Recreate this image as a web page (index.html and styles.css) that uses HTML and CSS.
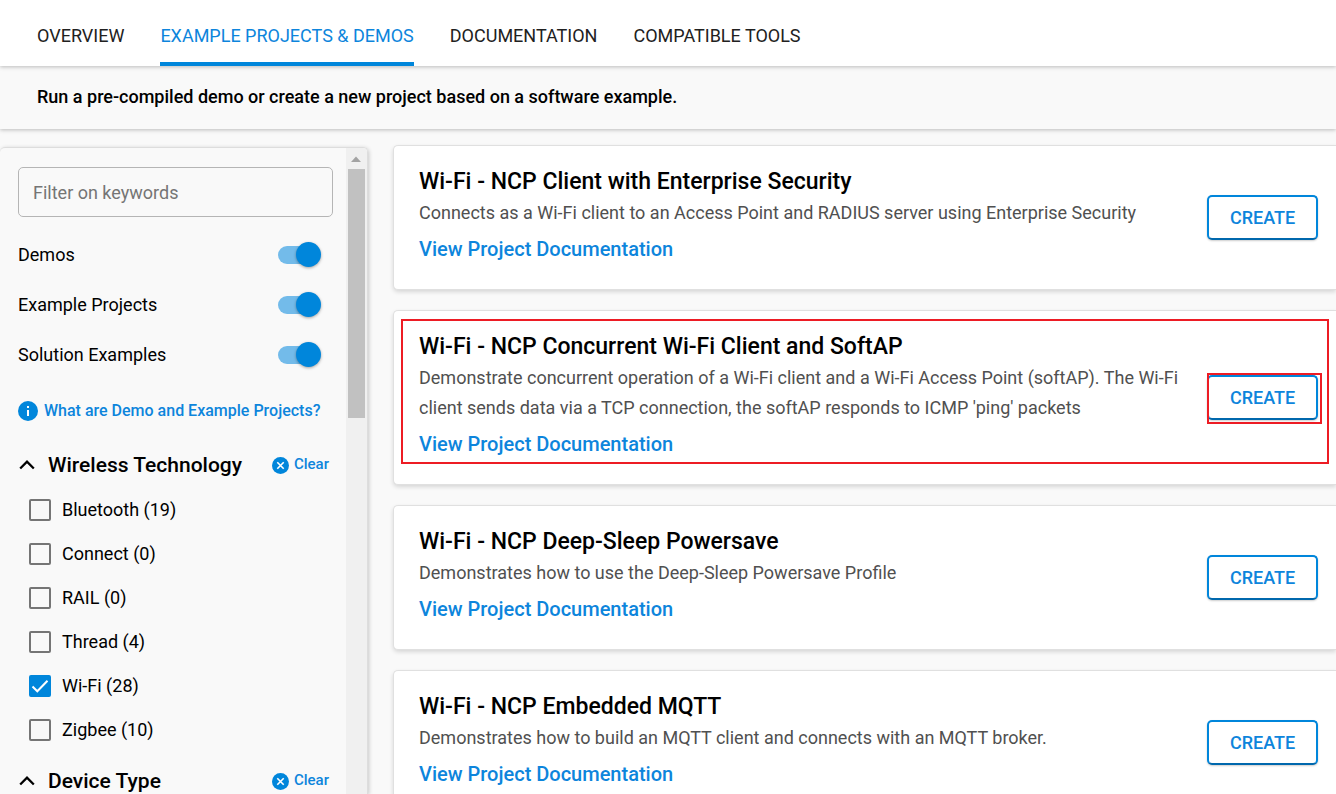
FILE: index.html
```html
<!DOCTYPE html>
<html lang="en">
<head>
<meta charset="utf-8">
<title>Example Projects &amp; Demos</title>
<link rel="stylesheet" href="styles.css">
</head>
<body>
<header class="topbar">
  <nav class="tabs">
    <a class="tab" href="#overview">OVERVIEW</a>
    <a class="tab tab-active" href="#examples" aria-current="page">EXAMPLE PROJECTS &amp; DEMOS</a>
    <a class="tab" href="#docs">DOCUMENTATION</a>
    <a class="tab" href="#tools">COMPATIBLE TOOLS</a>
  </nav>
</header>
<p class="intro">Run a pre-compiled demo or create a new project based on a software example.</p>
<div class="layout">
  <aside class="sidebar">
    <div class="filters">
      <input class="search" type="text" placeholder="Filter on keywords" aria-label="Filter on keywords">
      <div class="toggles">
        <label class="toggle-row"><span class="label">Demos</span><input class="switch" type="checkbox" role="switch" checked></label>
        <label class="toggle-row"><span class="label">Example Projects</span><input class="switch" type="checkbox" role="switch" checked></label>
        <label class="toggle-row"><span class="label">Solution Examples</span><input class="switch" type="checkbox" role="switch" checked></label>
      </div>
      <a class="info-link" href="#about">
        <svg class="info-icon" viewBox="0 0 20 20" aria-hidden="true"><circle cx="10" cy="10" r="10" fill="#0086db"/><path d="M9 5h2v2H9zM9 9h2v6H9z" fill="#fff"/></svg>
        <span class="label">What are Demo and Example Projects?</span>
      </a>
      <section class="group">
        <div class="group-head">
          <button class="group-toggle" type="button" aria-expanded="true">
            <svg class="chevron" viewBox="0 0 16 10" aria-hidden="true"><path d="M1.200 8.500L8 1.700L14.800 8.500" fill="none" stroke="#000" stroke-width="2.300"/></svg>
            <span>Wireless Technology</span>
          </button>
          <button class="clear" type="button">
            <svg class="clear-icon" viewBox="0 0 17 17" aria-hidden="true"><circle cx="8.500" cy="8.500" r="8.500" fill="#0086db"/><path d="M5.300 5.300L11.700 11.700M11.700 5.300L5.300 11.700" stroke="#fff" stroke-width="1.600"/></svg>
            <span class="label">Clear</span>
          </button>
        </div>
        <div class="options">
          <label class="option"><input class="check" type="checkbox"><span class="label">Bluetooth (19)</span></label>
          <label class="option"><input class="check" type="checkbox"><span class="label">Connect (0)</span></label>
          <label class="option"><input class="check" type="checkbox"><span class="label">RAIL (0)</span></label>
          <label class="option"><input class="check" type="checkbox"><span class="label">Thread (4)</span></label>
          <label class="option"><span class="check-wrap"><input class="check" type="checkbox" checked><svg class="tick" viewBox="0 0 22 22" aria-hidden="true"><path d="M3.500 11.500L8.300 16.300L18.500 5.800" fill="none" stroke="#fff" stroke-width="2"/></svg></span><span class="label">Wi-Fi (28)</span></label>
          <label class="option"><input class="check" type="checkbox"><span class="label">Zigbee (10)</span></label>
        </div>
      </section>
      <section class="group">
        <div class="group-head">
          <button class="group-toggle" type="button" aria-expanded="true">
            <svg class="chevron" viewBox="0 0 16 10" aria-hidden="true"><path d="M1.200 8.500L8 1.700L14.800 8.500" fill="none" stroke="#000" stroke-width="2.300"/></svg>
            <span>Device Type</span>
          </button>
          <button class="clear" type="button">
            <svg class="clear-icon" viewBox="0 0 17 17" aria-hidden="true"><circle cx="8.500" cy="8.500" r="8.500" fill="#0086db"/><path d="M5.300 5.300L11.700 11.700M11.700 5.300L5.300 11.700" stroke="#fff" stroke-width="1.600"/></svg>
            <span class="label">Clear</span>
          </button>
        </div>
      </section>
    </div>
    <div class="scrollbar" aria-hidden="true">
      <svg class="scroll-arrow" viewBox="0 0 20 21"><path d="M5 14L10 8.500L15 14z" fill="#a3a3a3"/></svg>
      <div class="scroll-thumb"></div>
    </div>
  </aside>
  <main class="cards">
    <article class="card">
      <div class="card-text">
        <h2 class="card-title">Wi-Fi - NCP Client with Enterprise Security</h2>
        <p class="card-desc">Connects as a Wi-Fi client to an Access Point and RADIUS server using Enterprise Security</p>
        <a class="card-link" href="#doc1">View Project Documentation</a>
      </div>
      <div class="action"><button class="create" type="button">CREATE</button></div>
    </article>
    <article class="card card-marked">
      <div class="card-text">
        <h2 class="card-title">Wi-Fi - NCP Concurrent Wi-Fi Client and SoftAP</h2>
        <p class="card-desc">Demonstrate concurrent operation of a Wi-Fi client and a Wi-Fi Access Point (softAP). The Wi-Fi client sends data via a TCP connection, the softAP responds to ICMP 'ping' packets</p>
        <a class="card-link" href="#doc2">View Project Documentation</a>
      </div>
      <div class="action action-marked"><button class="create" type="button">CREATE</button></div>
    </article>
    <article class="card">
      <div class="card-text">
        <h2 class="card-title">Wi-Fi - NCP Deep-Sleep Powersave</h2>
        <p class="card-desc">Demonstrates how to use the Deep-Sleep Powersave Profile</p>
        <a class="card-link" href="#doc3">View Project Documentation</a>
      </div>
      <div class="action"><button class="create" type="button">CREATE</button></div>
    </article>
    <article class="card">
      <div class="card-text">
        <h2 class="card-title">Wi-Fi - NCP Embedded MQTT</h2>
        <p class="card-desc">Demonstrates how to build an MQTT client and connects with an MQTT broker.</p>
        <a class="card-link" href="#doc4">View Project Documentation</a>
      </div>
      <div class="action"><button class="create" type="button">CREATE</button></div>
    </article>
  </main>
</div>
</body>
</html>
```
FILE: styles.css
```css
* { box-sizing: border-box; }

body {
  margin: 0;
  height: 100vh;
  overflow: hidden;
  display: flex;
  flex-direction: column;
  background: #f9f9f9;
  color: #000;
  font-family: Roboto, "Liberation Sans", sans-serif;
  font-size: 18px;
}

a { color: #0d85dc; text-decoration: none; }
button, input { font-family: inherit; }
button { border: 0; padding: 0; background: none; cursor: pointer; }

.topbar {
  flex: none;
  position: relative;
  padding-top: 6px;
  background: #fff;
  box-shadow: 0 1px 4px rgba(0, 0, 0, 0.25);
  z-index: 2;
}
.tabs {
  display: flex;
  gap: 36px;
  padding-left: 37px;
}
.tab {
  height: 60px;
  line-height: 60px;
  color: #212121;
  border-bottom: 4px solid transparent;
}
.tab-active {
  color: #0d85dc;
  border-bottom-color: #0086db;
}

.intro {
  flex: none;
  position: relative;
  margin: 0;
  padding: 15px 37px 17px;
  line-height: 31px;
  font-weight: 500;
  background: #f9f9f9;
  box-shadow: 0 1px 4px rgba(0, 0, 0, 0.25);
  z-index: 1;
}

.layout {
  flex: 1;
  min-height: 0;
  display: flex;
  gap: 25px;
}

.sidebar {
  flex: none;
  width: 368px;
  margin-top: 18px;
  display: flex;
  overflow: hidden;
  border: 1px solid #ddd;
  border-width: 1px 1px 0 0;
  border-radius: 5px 5px 0 0;
  box-shadow: 1px 1px 4px rgba(0, 0, 0, 0.2);
}
.filters {
  flex: 1;
  padding: 19px 13px 0 18px;
}
.label { padding-bottom: 2px; }
.search {
  display: block;
  width: 100%;
  height: 50px;
  padding: 0 14px;
  border: 1px solid #b5b5b5;
  border-radius: 5px;
  background: transparent;
  font-size: 18px;
}
.search::placeholder { color: #757575; opacity: 1; }
.toggles { margin-top: 13px; }
.toggle-row {
  display: flex;
  align-items: center;
  justify-content: space-between;
  height: 50px;
  padding-right: 12px;
}
.switch {
  appearance: none;
  position: relative;
  width: 43px;
  height: 26px;
  margin: 0;
}
.switch::before {
  content: "";
  position: absolute;
  inset: 4px 5px 4px 0;
  border-radius: 9px;
  background: #73bbea;
}
.switch::after {
  content: "";
  position: absolute;
  right: 0;
  top: 0;
  width: 25px;
  height: 25px;
  border-radius: 50%;
  background: #0086db;
  box-shadow: 0 1px 3px rgba(0, 0, 0, 0.35);
}
.info-link {
  display: flex;
  align-items: center;
  gap: 6px;
  height: 62px;
  font-size: 16px;
  font-weight: 500;
  white-space: nowrap;
}
.info-icon { width: 20px; height: 20px; }

.group-head {
  display: flex;
  align-items: center;
  justify-content: space-between;
  height: 46px;
  padding-right: 4px;
}
.group-toggle {
  display: flex;
  align-items: center;
  gap: 13px;
  padding-left: 1px;
  font-size: 21px;
  font-weight: 500;
  color: #000;
}
.chevron { width: 16px; height: 10px; }
.clear {
  display: flex;
  align-items: center;
  gap: 5px;
  font-size: 15px;
  font-weight: 500;
  color: #0d85dc;
}
.clear-icon { width: 17px; height: 17px; }
.options { padding: 0 0 6px 11px; }
.option {
  display: flex;
  align-items: center;
  gap: 11px;
  height: 44px;
}
.check-wrap {
  position: relative;
  width: 22px;
  height: 22px;
}
.check {
  appearance: none;
  display: block;
  width: 22px;
  height: 22px;
  margin: 0;
  border: 2px solid #757575;
  border-radius: 2px;
}
.check:checked {
  border-color: #0086db;
  background: #0086db;
}
.tick {
  position: absolute;
  inset: 0;
  width: 22px;
  height: 22px;
  pointer-events: none;
}

.scrollbar {
  flex: none;
  width: 21px;
  background: #f0f0f0;
}
.scroll-arrow { display: block; width: 20px; height: 21px; }
.scroll-thumb {
  height: 249px;
  margin: 0 2px;
  background: #c1c1c1;
}

.cards {
  flex: 1;
  min-width: 0;
  display: flex;
  flex-direction: column;
  gap: 20px;
  padding-top: 16px;
}
.card {
  flex: none;
  position: relative;
  display: flex;
  align-items: center;
  justify-content: space-between;
  gap: 24px;
  padding: 20px 18px 25px 25px;
  border: 1px solid #e0e0e0;
  border-right: 0;
  border-radius: 5px 0 0 5px;
  background: #fff;
  box-shadow: 0 2px 4px rgba(0, 0, 0, 0.14);
}
.card-text { min-width: 0; }
.card-title {
  margin: 0;
  font-size: 23px;
  font-weight: 500;
  line-height: 32px;
}
.card-desc {
  margin: 0 0 6px;
  line-height: 30px;
  color: #505050;
}
.card-link {
  display: block;
  font-size: 20px;
  font-weight: 500;
  line-height: 30px;
}
.action {
  flex: none;
  position: relative;
  margin-top: 5px;
}
.create {
  display: block;
  width: 111px;
  height: 45px;
  border: 2px solid #0086db;
  border-bottom-color: #0068ad;
  border-radius: 5px;
  background: #fff;
  box-shadow: 0 1px 2px rgba(0, 0, 0, 0.2);
  color: #0d85dc;
  font-size: 18px;
  font-weight: 500;
}

/* Red callout frames around the highlighted project */
.card-marked::after,
.action-marked::after {
  content: "";
  position: absolute;
  border: 2px solid #ed1c24;
  pointer-events: none;
}
.card-marked::after { inset: 8px 7px 20px 7px; }
.action-marked::after { inset: -2px -4px -4px 0; }
```
